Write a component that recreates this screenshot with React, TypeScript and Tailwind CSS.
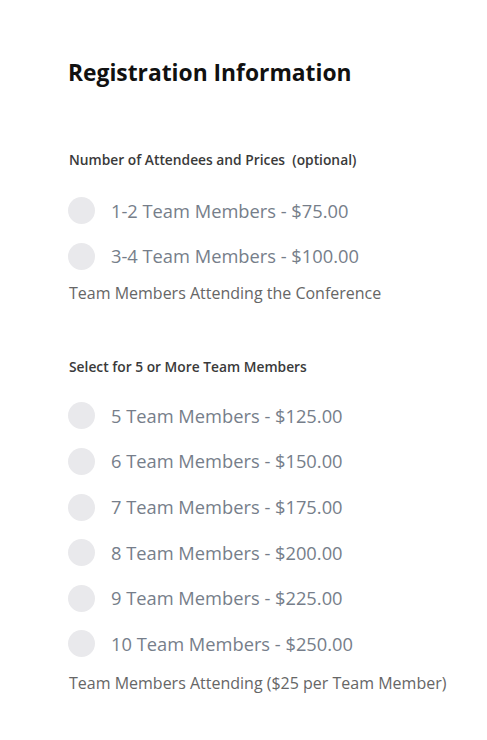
import React from 'react';

const firstOptions = ['1-2 Team Members - $75.00', '3-4 Team Members - $100.00'];
const moreOptions = [
  '5 Team Members - $125.00',
  '6 Team Members - $150.00',
  '7 Team Members - $175.00',
  '8 Team Members - $200.00',
  '9 Team Members - $225.00',
  '10 Team Members - $250.00',
];

const RadioRow = ({ label }: { label: string }) => (
  <label className="flex items-center h-[45.6px] cursor-pointer">
    <span className="w-[27px] h-[27px] rounded-full bg-[#e9e9ec] shrink-0" />
    <span className="ml-[16px] text-[18.3px] text-[#767e8a] leading-none">{label}</span>
  </label>
);

export default function App() {
  return (
    <div
      className="w-[487px] h-[740px] bg-white pl-[68px] pt-[58px]"
      style={{ fontFamily: '"Open Sans", "Liberation Sans", sans-serif' }}
    >
      <h1 className="text-[22.8px] font-bold text-[#111] leading-[30px]">Registration Information</h1>

      <div className="mt-[63px] text-[13.8px] font-semibold text-[#3a3a3a] leading-[18px] pl-[1px]">
        Number of Attendees and Prices&nbsp;&nbsp;(optional)
      </div>
      <div className="mt-[19px]">
        {firstOptions.map((o) => (
          <RadioRow key={o} label={o} />
        ))}
      </div>
      <div className="mt-[4px] text-[16px] text-[#666] leading-[20px] pl-[1px]">
        Team Members Attending the Conference
      </div>

      <div className="mt-[55px] text-[13.8px] font-semibold text-[#3a3a3a] leading-[18px] pl-[1px]">
        Select for 5 or More Team Members
      </div>
      <div className="mt-[17px]">
        {moreOptions.map((o) => (
          <RadioRow key={o} label={o} />
        ))}
      </div>
      <div className="mt-[6px] text-[16px] text-[#666] leading-[20px] pl-[1px]">
        Team Members Attending ($25 per Team Member)
      </div>
    </div>
  );
}
